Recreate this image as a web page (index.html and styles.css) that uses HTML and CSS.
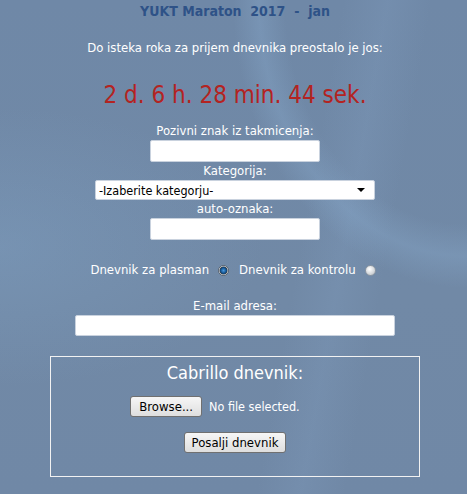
FILE: index.html
```html
<!DOCTYPE html>
<html>
<head>
    <title>YUKT Maraton - prijem dnevnika</title>
    <meta charset="utf-8">
    <link rel="stylesheet" href="styles.css">
</head>
<body>
    <div class="page">
        <h1 class="title">YUKT Maraton&nbsp; 2017&nbsp; -&nbsp; jan</h1>

        <p class="notice">Do isteka roka za prijem dnevnika preostalo je jos:</p>
        <p class="countdown">2 d. 6 h. 28 min. 44 sek.</p>

        <form class="log-form">
            <label class="field-label">Pozivni znak iz takmicenja:</label>
            <input type="text" class="text-input">

            <label class="field-label">Kategorija:</label>
            <div class="select-wrap">
                <select class="category">
                    <option>-Izaberite kategorju-</option>
                </select>
            </div>

            <label class="field-label">auto-oznaka:</label>
            <input type="text" class="text-input">

            <div class="radio-row">
                <span>Dnevnik za plasman</span>
                <input type="radio" name="tip" class="radio" checked>
                <span>Dnevnik za kontrolu</span>
                <input type="radio" name="tip" class="radio">
            </div>

            <label class="field-label">E-mail adresa:</label>
            <input type="text" class="text-input email">

            <div class="upload-box">
                <div class="upload-title">Cabrillo dnevnik:</div>
                <div class="file-row">
                    <button type="button" class="btn">Browse...</button>
                    <span class="file-name">No file selected.</span>
                </div>
                <button type="button" class="btn send">Posalji dnevnik</button>
            </div>
        </form>
    </div>
</body>
</html>
```

FILE: styles.css
```css
html, body {
    height: 100%;
}
body {
    margin: 0;
    font-family: "DejaVu Sans Condensed", "DejaVu Sans", sans-serif;
    font-size: 13px;
    color: #ffffff;
    background-color: #7089a8;
    background-image:
        radial-gradient(ellipse 260px 320px at 100% 0%, rgba(0,0,0,0) 70%, rgba(140,175,210,0.3) 80%, rgba(0,0,0,0) 90%),
        linear-gradient(100deg, rgba(0,0,0,0) 62%, rgba(135,165,200,0.2) 70%, rgba(0,0,0,0) 78%),
        radial-gradient(ellipse at 0% 50%, rgba(130,165,200,0.35), rgba(0,0,0,0) 40%),
        linear-gradient(180deg, #6f88a7 0%, #7189a6 60%, #7088a6 100%);
    overflow: hidden;
}
.page {
    text-align: center;
    padding-left: 3px;
    padding-top: 3px;
}
.title {
    margin: 0;
    font-size: 14px;
    font-weight: bold;
    line-height: 16px;
    color: #2e5287;
}
.notice {
    margin: 20px 0 0;
    font-size: 13px;
    line-height: 18px;
}
.countdown {
    margin: 23px 0 0;
    font-size: 24px;
    line-height: 30px;
    color: #b42321;
}
.log-form {
    display: flex;
    flex-direction: column;
    align-items: center;
    margin-top: 12px;
}
.field-label {
    display: block;
    font-size: 13px;
    line-height: 18px;
}
.text-input {
    box-sizing: border-box;
    width: 170px;
    height: 22px;
    margin: 0;
    border: 1px solid #c9d2de;
    border-radius: 2px;
    background: #ffffff;
}
.select-wrap {
    position: relative;
    width: 280px;
    height: 20px;
}
.select-wrap::after {
    content: "";
    position: absolute;
    right: 10px;
    top: 8px;
    border-left: 4px solid transparent;
    border-right: 4px solid transparent;
    border-top: 4px solid #000000;
    pointer-events: none;
}
.category {
    -webkit-appearance: none;
    appearance: none;
    box-sizing: border-box;
    width: 280px;
    height: 20px;
    margin: 0;
    padding: 0 0 0 3px;
    border: 1px solid #c9d2de;
    border-radius: 2px;
    background: #ffffff;
    font-family: "DejaVu Sans Condensed", "DejaVu Sans", sans-serif;
    font-size: 12.5px;
    color: #000000;
}
.radio-row {
    display: flex;
    align-items: center;
    gap: 6px;
    margin-top: 19px;
    height: 20px;
    font-size: 13px;
}
.radio {
    -webkit-appearance: none;
    appearance: none;
    width: 11px;
    height: 11px;
    margin: 3px 4px 0 3px;
    border-radius: 50%;
    border: 1px solid #8c97a3;
    background: radial-gradient(circle at 40% 35%, #ffffff, #c4c9ce 80%);
}
.radio:checked {
    border-color: #5d6670;
    background: radial-gradient(circle at 50% 50%, #4a9ade 0, #0e4a84 3px, #3a4550 3.6px, #dfe3e7 4.4px, #c7ccd1 100%);
}
.radio-row + .field-label {
    margin-top: 18px;
}
.email {
    width: 320px;
    height: 21px;
}
.upload-box {
    box-sizing: border-box;
    width: 370px;
    height: 121px;
    margin-top: 20px;
    border: 1px solid #f2f2f2;
    display: flex;
    flex-direction: column;
    align-items: center;
}
.upload-title {
    margin-top: 5px;
    font-size: 18px;
    line-height: 22px;
}
.file-row {
    display: flex;
    align-items: center;
    gap: 7px;
    margin-top: 12px;
    margin-left: -40px;
}
.btn {
    box-sizing: border-box;
    height: 21px;
    padding: 0 8px;
    border: 1px solid #707070;
    border-radius: 3px;
    background: linear-gradient(#f6f6f6, #dedede);
    font-family: "DejaVu Sans Condensed", "DejaVu Sans", sans-serif;
    font-size: 13px;
    color: #000000;
}
.file-name {
    font-size: 12.5px;
}
.send {
    margin-top: 15px;
    padding: 0 7px;
}
```
